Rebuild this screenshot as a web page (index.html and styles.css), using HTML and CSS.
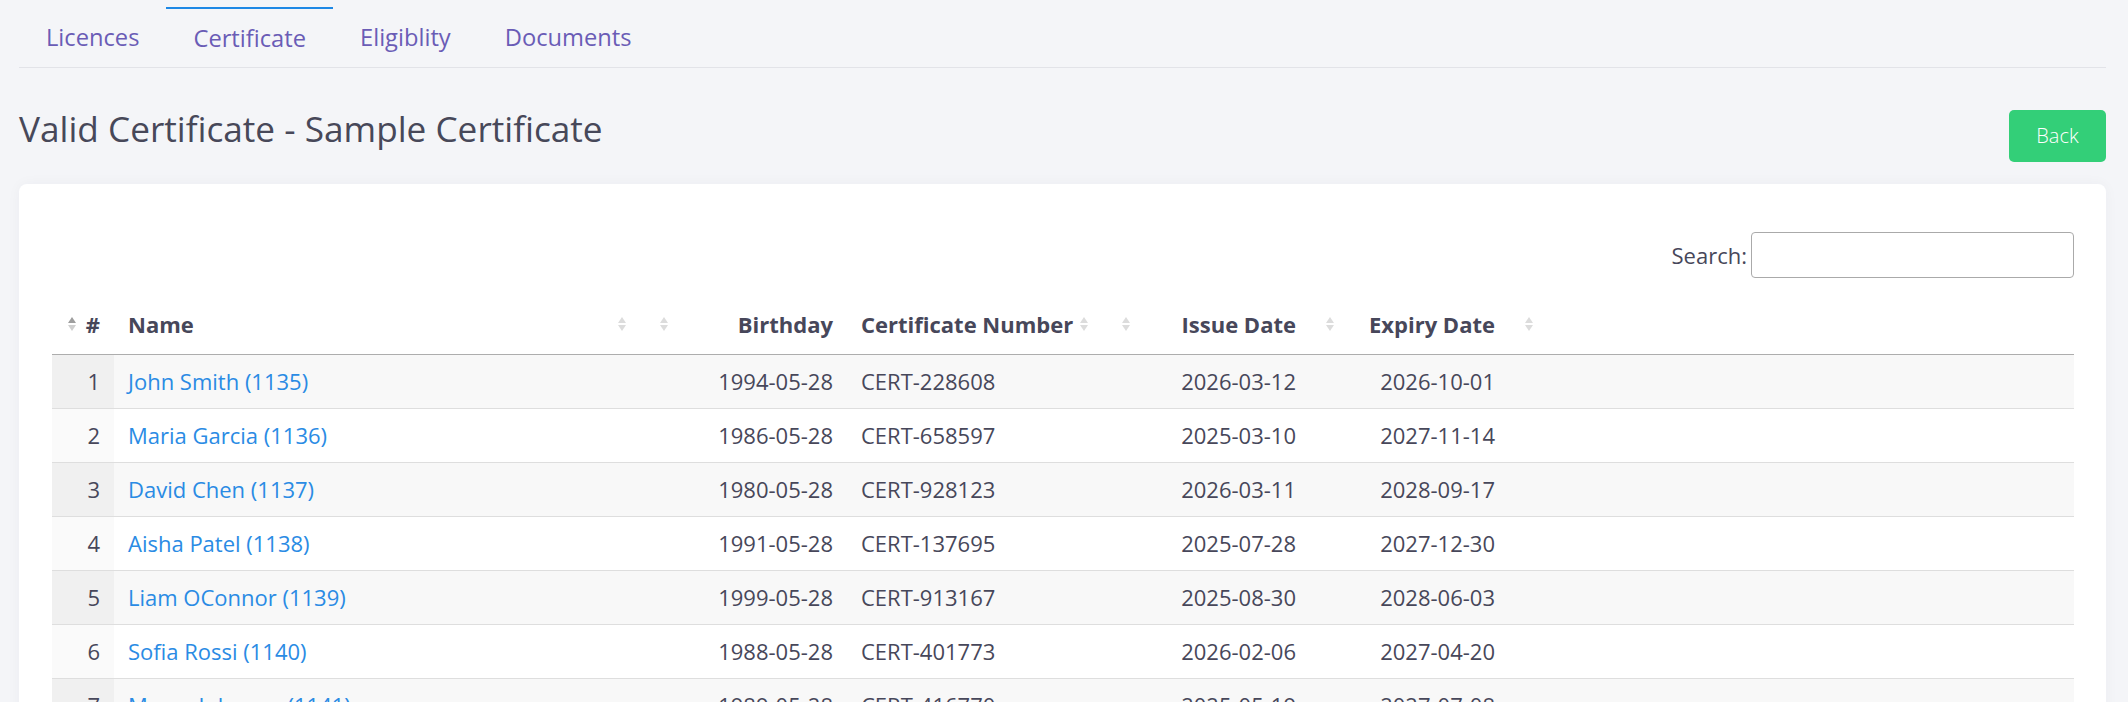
FILE: index.html
```html
<!DOCTYPE html>
<html lang="en">
  <head>
    <meta charset="utf-8" />
    <meta name="viewport" content="width=device-width, initial-scale=1" />
    <title>Valid Certificate - Sample Certificate</title>
    <link rel="stylesheet" href="styles.css">
  </head>

  <body>
    <div class="page">
      <ul class="tabs">
        <li><a href="#">Licences</a></li>
        <li class="active"><a href="#">Certificate</a></li>
        <li><a href="#">Eligiblity</a></li>
        <li><a href="#">Documents</a></li>
      </ul>

      <div class="page-head">
        <h2>Valid Certificate - Sample Certificate</h2>
        <a class="btn-back" href="#">Back</a>
      </div>

      <div class="card">
        <div class="search">
          <label for="search">Search:</label>
          <input id="search" type="search" />
        </div>

        <table class="data">
          <colgroup>
            <col style="width: 62px" />
            <col style="width: 530px" />
            <col style="width: 203px" />
            <col style="width: 259px" />
            <col style="width: 204px" />
            <col style="width: 199px" />
            <col />
          </colgroup>
          <thead>
            <tr>
              <th class="num"><span class="sort asc"></span><span>#</span></th>
              <th><span>Name</span><span class="sort"></span></th>
              <th class="num"><span class="sort"></span><span>Birthday</span></th>
              <th><span>Certificate Number</span><span class="sort"></span></th>
              <th class="num"><span class="sort"></span><span>Issue Date</span></th>
              <th class="num"><span class="sort"></span><span>Expiry Date</span></th>
              <th class="num"><span class="sort"></span><span></span></th>
            </tr>
          </thead>
          <tbody>
            <tr>
              <td class="right sorted">1</td>
              <td><a href="#">John Smith (1135)</a></td>
              <td class="right">1994-05-28</td>
              <td>CERT-228608</td>
              <td class="right">2026-03-12</td>
              <td class="right">2026-10-01</td>
              <td></td>
            </tr>
            <tr>
              <td class="right sorted">2</td>
              <td><a href="#">Maria Garcia (1136)</a></td>
              <td class="right">1986-05-28</td>
              <td>CERT-658597</td>
              <td class="right">2025-03-10</td>
              <td class="right">2027-11-14</td>
              <td></td>
            </tr>
            <tr>
              <td class="right sorted">3</td>
              <td><a href="#">David Chen (1137)</a></td>
              <td class="right">1980-05-28</td>
              <td>CERT-928123</td>
              <td class="right">2026-03-11</td>
              <td class="right">2028-09-17</td>
              <td></td>
            </tr>
            <tr>
              <td class="right sorted">4</td>
              <td><a href="#">Aisha Patel (1138)</a></td>
              <td class="right">1991-05-28</td>
              <td>CERT-137695</td>
              <td class="right">2025-07-28</td>
              <td class="right">2027-12-30</td>
              <td></td>
            </tr>
            <tr>
              <td class="right sorted">5</td>
              <td><a href="#">Liam OConnor (1139)</a></td>
              <td class="right">1999-05-28</td>
              <td>CERT-913167</td>
              <td class="right">2025-08-30</td>
              <td class="right">2028-06-03</td>
              <td></td>
            </tr>
            <tr>
              <td class="right sorted">6</td>
              <td><a href="#">Sofia Rossi (1140)</a></td>
              <td class="right">1988-05-28</td>
              <td>CERT-401773</td>
              <td class="right">2026-02-06</td>
              <td class="right">2027-04-20</td>
              <td></td>
            </tr>
            <tr>
              <td class="right sorted">7</td>
              <td><a href="#">Marco Johnson (1141)</a></td>
              <td class="right">1989-05-28</td>
              <td>CERT-416770</td>
              <td class="right">2025-05-19</td>
              <td class="right">2027-07-08</td>
              <td></td>
            </tr>
          </tbody>
        </table>
      </div>
    </div>
  </body>
</html>
```

FILE: styles.css
```css
html {
  font-family: "Open Sans", "Liberation Sans", sans-serif;
  font-size: 22px;
  color: #47475a;
}

body {
  margin: 0;
  background-color: #f4f5f8;
}

a {
  text-decoration: none;
}

.page {
  padding: 0 22px 40px 19px;
}

/* tabs */

.tabs {
  display: flex;
  margin: 0;
  padding: 0;
  list-style: none;
  border-bottom: 1px solid #e2e3e8;
}

.tabs li {
  margin-top: 7px;
  border-top: 2px solid transparent;
}

.tabs li.active {
  border-top-color: #1e88e5;
}

.tabs a {
  display: block;
  padding: 0 27px;
  height: 58px;
  line-height: 56px;
  font-size: 23.7px;
  color: #6a5cb6;
}

.tabs li.active a {
  line-height: 58px;
}

/* title row */

.page-head {
  display: flex;
  justify-content: space-between;
  align-items: flex-start;
  margin-top: 42px;
}

.page-head h2 {
  margin: 0;
  font-size: 35.2px;
  font-weight: 400;
  line-height: 36px;
  color: #474859;
}

.btn-back {
  display: block;
  width: 97px;
  height: 52px;
  line-height: 52px;
  text-align: center;
  font-size: 20px;
  font-weight: 300;
  color: white;
  background-color: #33cf78;
  border-radius: 5px;
}

/* card */

.card {
  margin-top: 22px;
  padding: 48px 32px 0 33px;
  background-color: white;
  border-radius: 8px;
  box-shadow: 0 0 14px rgba(30, 40, 70, 0.04);
}

.search {
  display: flex;
  justify-content: flex-end;
  align-items: center;
  gap: 4px;
}

.search label {
  font-size: 22px;
}

.search input {
  box-sizing: border-box;
  width: 323px;
  height: 46px;
  border: 1px solid #aaa;
  border-radius: 4px;
  font: inherit;
  appearance: none;
}

/* table */

.data {
  width: 100%;
  margin-top: 16px;
  border-collapse: collapse;
  table-layout: fixed;
}

.data th {
  position: relative;
  padding: 16px 14px;
  line-height: 28px;
  font-weight: 700;
  text-align: left;
  white-space: nowrap;
  vertical-align: middle;
  border-bottom: 1px solid #adadad;
}

.data th span {
  display: inline-block;
}

/* sort arrows, drawn as two small triangles */
.data th .sort {
  position: absolute;
  top: 50%;
  width: 8px;
  height: 18px;
  margin-top: -9px;
}

.data th .sort::before,
.data th .sort::after {
  content: "";
  position: absolute;
  left: 0;
  border-left: 4px solid transparent;
  border-right: 4px solid transparent;
}

.data th .sort::before {
  top: 2px;
  border-bottom: 6px solid #dcdcdc;
}

.data th .sort::after {
  bottom: 2px;
  border-top: 6px solid #dcdcdc;
}

.data th .sort.asc::before {
  border-bottom-color: #9e9e9e;
}

.data th .sort.asc::after {
  border-top-color: #cfcfcf;
}

/* left columns: icon at the far right */
.data th:not(.num) .sort {
  right: 18px;
}

/* numeric columns: icon at the far left, title at the right */
.data th.num {
  text-align: right;
}

.data th.num .sort {
  left: 16px;
}

.data td {
  padding: 12px 14px;
  line-height: 29px;
  border-bottom: 1px solid #dedede;
  white-space: nowrap;
}

.data td.right {
  text-align: right;
}

.data td a {
  color: #2a8be4;
}

.data tbody tr:nth-child(odd) td {
  background-color: #f8f8f8;
}

.data tbody tr:nth-child(odd) td.sorted {
  background-color: #f0f0f0;
}

.data tbody tr:nth-child(even) td.sorted {
  background-color: #fafafa;
}
```
